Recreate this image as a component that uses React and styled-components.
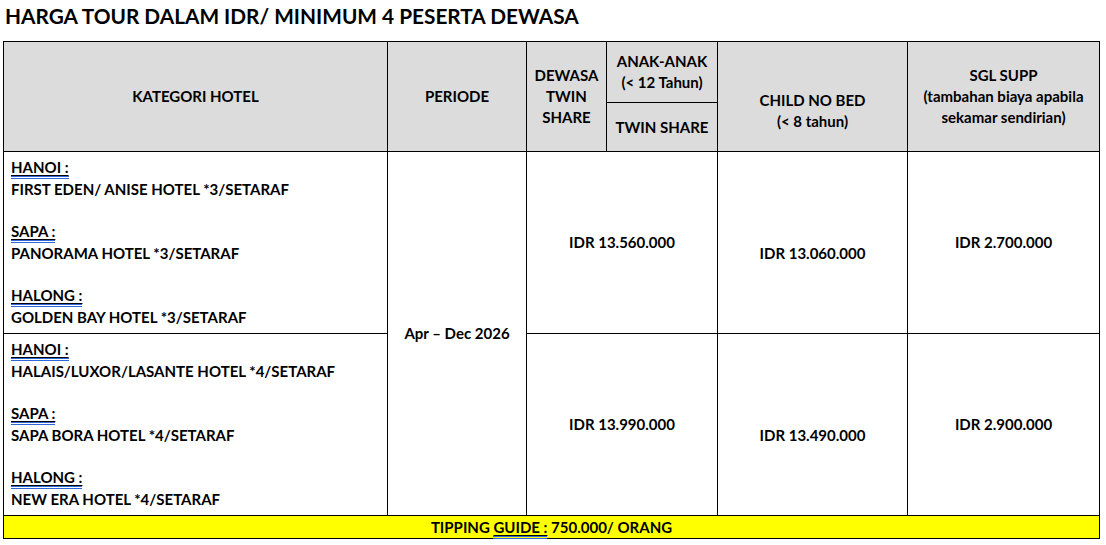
import styled, { createGlobalStyle } from 'styled-components';

const GlobalStyle = createGlobalStyle`
  html, body {
    margin: 0;
    padding: 0;
    background: #ffffff;
  }
  body {
    font-family: Lato, 'Liberation Sans', sans-serif;
    color: #000000;
  }
`;

const Page = styled.div`
  padding: 3px 0 0 3px;
  width: 1096px;
`;

const Title = styled.h1`
  margin: 0 0 0 2px;
  font-size: 20.8px;
  line-height: 25px;
  font-weight: 700;
  height: 38px;
`;

const Table = styled.table`
  border-collapse: collapse;
  table-layout: fixed;
  width: 1096px;
  font-size: 15px;
  font-weight: 700;
  line-height: 21px;

  td, th {
    border: 1px solid #000000;
    padding: 0;
  }
`;

const HeadCell = styled.th`
  background: #dcdcdc;
  text-align: center;
  vertical-align: middle;
  font-weight: 700;
  padding-top: ${p => p.$offset || 0}px !important;
`;

const HotelCell = styled.td`
  vertical-align: top;
  text-align: left;
  padding: 6px 6px 0 7px !important;
`;

const ValueCell = styled.td`
  text-align: center;
  vertical-align: middle;
  padding-top: ${p => p.$offset || 0}px !important;
`;

const CityLabel = styled.div`
  width: fit-content;
  text-decoration: underline;
  text-decoration-thickness: 1px;
  text-underline-offset: 2px;
  line-height: 18px;
  border-bottom: 3px double #2f67d8;
`;

const HotelName = styled.div`
  line-height: 21px;
`;

const Spacer = styled.div`
  height: 22px;
`;

const TipRow = styled.tr`
  background: #ffff00;
  height: 23px;
`;

const TipCell = styled.td`
  text-align: center;
  vertical-align: middle;
  line-height: 20px;
`;

const TipLink = styled.span`
  text-decoration: underline;
  text-decoration-thickness: 1px;
  text-underline-offset: 2px;
  border-bottom: 3px double #2f67d8;
`;

const hotelGroups = [
  [
    { city: 'HANOI :', hotel: 'FIRST EDEN/ ANISE HOTEL *3/SETARAF' },
    { city: 'SAPA :', hotel: 'PANORAMA HOTEL *3/SETARAF' },
    { city: 'HALONG :', hotel: 'GOLDEN BAY HOTEL *3/SETARAF' },
  ],
  [
    { city: 'HANOI :', hotel: 'HALAIS/LUXOR/LASANTE HOTEL *4/SETARAF' },
    { city: 'SAPA :', hotel: 'SAPA BORA HOTEL *4/SETARAF' },
    { city: 'HALONG :', hotel: 'NEW ERA HOTEL *4/SETARAF' },
  ],
];

const prices = [
  { twin: 'IDR 13.560.000', child: 'IDR 13.060.000', sgl: 'IDR 2.700.000' },
  { twin: 'IDR 13.990.000', child: 'IDR 13.490.000', sgl: 'IDR 2.900.000' },
];

const HotelList = ({ items }) => (
  <HotelCell>
    {items.map((it, i) => (
      <div key={it.city}>
        {i > 0 && <Spacer />}
        <CityLabel>{it.city}</CityLabel>
        <HotelName>{it.hotel}</HotelName>
      </div>
    ))}
  </HotelCell>
);

export default function App() {
  return (
    <>
      <GlobalStyle />
      <Page>
        <Title>HARGA TOUR DALAM IDR/ MINIMUM 4 PESERTA DEWASA</Title>
        <Table>
          <colgroup>
            <col style={{ width: 384 }} />
            <col style={{ width: 139 }} />
            <col style={{ width: 80 }} />
            <col style={{ width: 111 }} />
            <col style={{ width: 190 }} />
            <col style={{ width: 192 }} />
          </colgroup>
          <thead>
            <tr style={{ height: 61 }}>
              <HeadCell rowSpan={2}>KATEGORI HOTEL</HeadCell>
              <HeadCell rowSpan={2}>PERIODE</HeadCell>
              <HeadCell rowSpan={2}>DEWASA<br />TWIN<br />SHARE</HeadCell>
              <HeadCell>ANAK-ANAK<br />(&lt; 12 Tahun)</HeadCell>
              <HeadCell rowSpan={2} $offset={29}>CHILD NO BED<br />(&lt; 8 tahun)</HeadCell>
              <HeadCell rowSpan={2}>SGL SUPP<br />(tambahan biaya apabila<br />sekamar sendirian)</HeadCell>
            </tr>
            <tr style={{ height: 49 }}>
              <HeadCell>TWIN SHARE</HeadCell>
            </tr>
          </thead>
          <tbody>
            {prices.map((p, i) => (
              <tr key={p.twin} style={{ height: 182 }}>
                <HotelList items={hotelGroups[i]} />
                {i === 0 && <ValueCell rowSpan={2}>Apr – Dec 2026</ValueCell>}
                <ValueCell colSpan={2}>{p.twin}</ValueCell>
                <ValueCell $offset={22}>{p.child}</ValueCell>
                <ValueCell>{p.sgl}</ValueCell>
              </tr>
            ))}
            <TipRow>
              <TipCell colSpan={6}>
                TIPPING <TipLink>GUIDE :</TipLink> 750.000/ ORANG
              </TipCell>
            </TipRow>
          </tbody>
        </Table>
      </Page>
    </>
  );
}
